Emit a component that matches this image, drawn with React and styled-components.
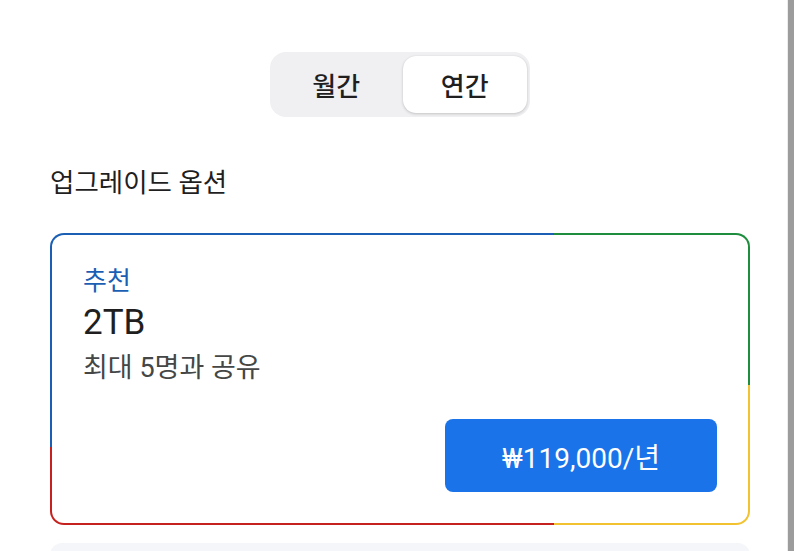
import styled, { createGlobalStyle } from "styled-components";

const GlobalStyle = createGlobalStyle`
  html, body {
    margin: 0;
    padding: 0;
    background: #ffffff;
  }
  body {
    font-family: "Roboto", "Noto Sans CJK KR", sans-serif;
    color: #1f1f1f;
    overflow: hidden;
  }
`;

const plans = [
  {
    badge: "추천",
    size: "2TB",
    note: "최대 5명과 공유",
    price: "₩119,000/년",
  },
];

export default function App() {
  return (
    <Page>
      <GlobalStyle />
      <Toggle>
        <Segment>월간</Segment>
        <Segment active>연간</Segment>
      </Toggle>

      <Heading>업그레이드 옵션</Heading>

      {plans.map((plan) => (
        <CardFrame key={plan.size}>
          <Card>
            <Badge>{plan.badge}</Badge>
            <Size>{plan.size}</Size>
            <Note>{plan.note}</Note>
            <PriceRow>
              <PriceButton>{plan.price}</PriceButton>
            </PriceRow>
          </Card>
        </CardFrame>
      ))}

      <NextCard />
      <ScrollThumb />
    </Page>
  );
}

const Page = styled.main`
  position: relative;
  width: 800px;
  height: 551px;
  overflow: hidden;
  box-sizing: border-box;
  padding: 52px 50px 0;
  display: flex;
  flex-direction: column;

  & > * {
    flex-shrink: 0;
  }
`;

const Toggle = styled.div`
  align-self: center;
  width: 260px;
  height: 65px;
  box-sizing: border-box;
  padding: 4px 3px 4px 4px;
  border-radius: 16px;
  background: #f0f0f2;
  display: grid;
  grid-template-columns: 1fr 1fr;
  gap: 4px;
`;

const Segment = styled.button`
  border: none;
  margin: 0;
  padding: 0;
  font-family: inherit;
  font-size: 26px;
  font-weight: 500;
  color: #1f1f1f;
  border-radius: 13px;
  background: ${(p) => (p.active ? "#ffffff" : "transparent")};
  box-shadow: ${(p) =>
    p.active ? "0 1px 3px rgba(0, 0, 0, 0.18), 0 0 1px rgba(0,0,0,0.1)" : "none"};
  display: flex;
  align-items: center;
  justify-content: center;
`;

const Heading = styled.h2`
  margin: 48px 0 0;
  font-size: 26.5px;
  font-weight: 400;
  line-height: 36px;
  color: #1f1f1f;
`;

const CardFrame = styled.section`
  margin-top: 32px;
  height: 292px;
  box-sizing: border-box;
  padding: 2px;
  border-radius: 14px;
  background: conic-gradient(
    from 0deg at 72% 52%,
    #1e8e3e 0deg 90deg,
    #f2c230 90deg 180deg,
    #c5221f 180deg 263deg,
    #1a5fb4 263deg 360deg
  );
`;

const Card = styled.div`
  height: 100%;
  box-sizing: border-box;
  border-radius: 12px;
  background: #ffffff;
  padding: 28px 31px 31px;
  display: flex;
  flex-direction: column;
`;

const Badge = styled.div`
  font-size: 26px;
  font-weight: 400;
  line-height: 36px;
  color: #1a5fb4;
`;

const Size = styled.div`
  margin-top: 3px;
  font-size: 35px;
  font-weight: 400;
  line-height: 42px;
  color: #1f1f1f;
`;

const Note = styled.div`
  margin-top: 6px;
  font-size: 27px;
  font-weight: 400;
  line-height: 36px;
  color: #444746;
`;

const PriceRow = styled.div`
  margin-top: auto;
  display: flex;
  justify-content: flex-end;
`;

const PriceButton = styled.button`
  width: 272px;
  height: 73px;
  border: none;
  border-radius: 8px;
  background: #1a73e8;
  color: #ffffff;
  font-family: inherit;
  font-size: 28px;
  font-weight: 400;
`;

const NextCard = styled.div`
  margin-top: 18px;
  height: 40px;
  border-radius: 12px;
  background: #f4f6f9;
`;

const ScrollThumb = styled.div`
  position: absolute;
  top: 0;
  right: 6px;
  width: 6px;
  height: 100%;
  background: #9c9c9c;
  border-left: 1px solid #ececec;
`;
